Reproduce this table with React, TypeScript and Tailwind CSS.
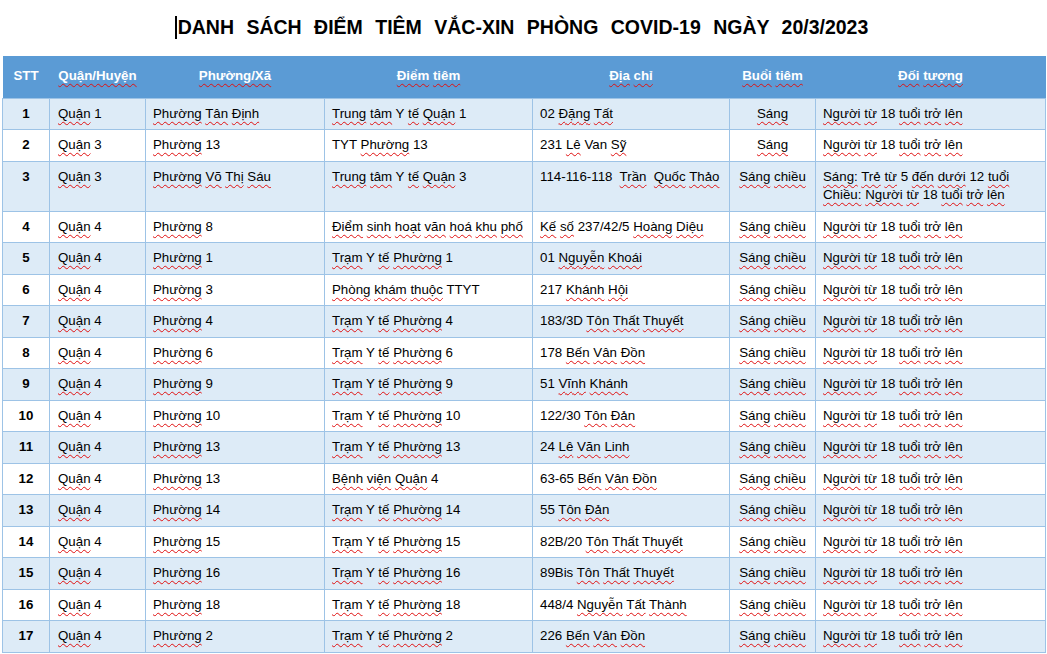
import React from "react";

type Row = [string, string, string, string, string, string, string[]];

const ADULT = ["Người từ 18 tuổi trở lên"];

const rows: Row[] = [
  ["1", "Quận 1", "Phường Tân Định", "Trung tâm Y tế Quận 1", "02 Đặng Tất", "Sáng", ADULT],
  ["2", "Quận 3", "Phường 13", "TYT Phường 13", "231 Lê Van Sỹ", "Sáng", ADULT],
  ["3", "Quận 3", "Phường Võ Thị Sáu", "Trung tâm Y tế Quận 3", "114-116-118  Trần  Quốc Thảo", "Sáng chiều", ["Sáng: Trẻ từ 5 đến dưới 12 tuổi", "Chiều: Người từ 18 tuổi trở lên"]],
  ["4", "Quận 4", "Phường 8", "Điểm sinh hoạt văn hoá khu phố", "Kế số 237/42/5 Hoàng Diệu", "Sáng chiều", ADULT],
  ["5", "Quận 4", "Phường 1", "Trạm Y tế Phường 1", "01 Nguyễn Khoái", "Sáng chiều", ADULT],
  ["6", "Quận 4", "Phường 3", "Phòng khám thuộc TTYT", "217 Khánh Hội", "Sáng chiều", ADULT],
  ["7", "Quận 4", "Phường 4", "Trạm Y tế Phường 4", "183/3D Tôn Thất Thuyết", "Sáng chiều", ADULT],
  ["8", "Quận 4", "Phường 6", "Trạm Y tế Phường 6", "178 Bến Vân Đồn", "Sáng chiều", ADULT],
  ["9", "Quận 4", "Phường 9", "Trạm Y tế Phường 9", "51 Vĩnh Khánh", "Sáng chiều", ADULT],
  ["10", "Quận 4", "Phường 10", "Trạm Y tế Phường 10", "122/30 Tôn Đản", "Sáng chiều", ADULT],
  ["11", "Quận 4", "Phường 13", "Trạm Y tế Phường 13", "24 Lê Văn Linh", "Sáng chiều", ADULT],
  ["12", "Quận 4", "Phường 13", "Bệnh viện Quận 4", "63-65 Bến Vân Đồn", "Sáng chiều", ADULT],
  ["13", "Quận 4", "Phường 14", "Trạm Y tế Phường 14", "55 Tôn Đản", "Sáng chiều", ADULT],
  ["14", "Quận 4", "Phường 15", "Trạm Y tế Phường 15", "82B/20 Tôn Thất Thuyết", "Sáng chiều", ADULT],
  ["15", "Quận 4", "Phường 16", "Trạm Y tế Phường 16", "89Bis Tôn Thất Thuyết", "Sáng chiều", ADULT],
  ["16", "Quận 4", "Phường 18", "Trạm Y tế Phường 18", "448/4 Nguyễn Tất Thành", "Sáng chiều", ADULT],
  ["17", "Quận 4", "Phường 2", "Trạm Y tế Phường 2", "226 Bến Vân Đồn", "Sáng chiều", ADULT],
];

const NO_MARK = new Set(["Y", "TYT", "Van", "STT", "TTYT"]);

function Spell({ text }: { text: string }) {
  const parts = text.split(/(\s+)/);
  return (
    <>
      {parts.map((p, i) => {
        if (/^\s+$/.test(p) || p === "") return <span key={i}>{p}</span>;
        const mark = !/\d/.test(p) && !NO_MARK.has(p);
        return mark ? (
          <span
            key={i}
            className="underline decoration-wavy decoration-[#e01010] decoration-1 underline-offset-[3px] [text-decoration-skip-ink:none]"
          >
            {p}
          </span>
        ) : (
          <span key={i}>{p}</span>
        );
      })}
    </>
  );
}

export default function App() {
  const widths = [47, 96, 179, 208, 197, 86, 230];
  return (
    <div
      className="w-[1047px] h-[654px] bg-white overflow-hidden text-black"
      style={{ fontFamily: '"Liberation Sans", Arial, sans-serif' }}
    >
      <div className="h-[56px] flex items-start justify-center pt-[16px] pr-[4px]">
        <h1 className="text-[19.5px] leading-[23px] font-bold whitespace-pre flex items-center [word-spacing:7px]">
          <span className="inline-block w-[2px] h-[23px] bg-black mr-[1px]" />
          DANH SÁCH ĐIỂM TIÊM VẮC-XIN PHÒNG COVID-19 NGÀY 20/3/2023
        </h1>
      </div>
      <div className="pl-[2px]">
        <table className="table-fixed border-collapse text-[13.3px] leading-[18px]">
          <colgroup>
            {widths.map((w, i) => (
              <col key={i} style={{ width: w }} />
            ))}
          </colgroup>
          <thead>
            <tr className="bg-[#5b9bd5] text-white font-bold h-[42px]">
              {["STT", "Quận/Huyện", "Phường/Xã", "Điểm tiêm", "Địa chỉ", "Buổi tiêm", "Đối tượng"].map((h, i) => (
                <th key={i} className="text-center align-middle font-bold p-0 pb-[2px]">
                  <Spell text={h} />
                </th>
              ))}
            </tr>
          </thead>
          <tbody>
            {rows.map((r, idx) => {
              const tall = r[6].length > 1;
              const bg = idx % 2 === 0 ? "bg-[#ddebf7]" : "bg-white";
              const td = "border border-[#9dc3e6] align-top pt-[6px] whitespace-pre overflow-hidden";
              return (
                <tr key={idx} className={`${bg} ${tall ? "h-[50px]" : "h-[31.5px]"}`}>
                  <td className={`${td} text-center font-bold`}>{r[0]}</td>
                  <td className={`${td} pl-[8px]`}><Spell text={r[1]} /></td>
                  <td className={`${td} pl-[7px]`}><Spell text={r[2]} /></td>
                  <td className={`${td} pl-[7px]`}><Spell text={r[3]} /></td>
                  <td className={`${td} pl-[7px]`}><Spell text={r[4]} /></td>
                  <td className={`${td} text-center`}><Spell text={r[5]} /></td>
                  <td className={`${td} pl-[7px]`}>
                    {r[6].map((l, k) => (
                      <div key={k}><Spell text={l} /></div>
                    ))}
                  </td>
                </tr>
              );
            })}
          </tbody>
        </table>
      </div>
    </div>
  );
}
